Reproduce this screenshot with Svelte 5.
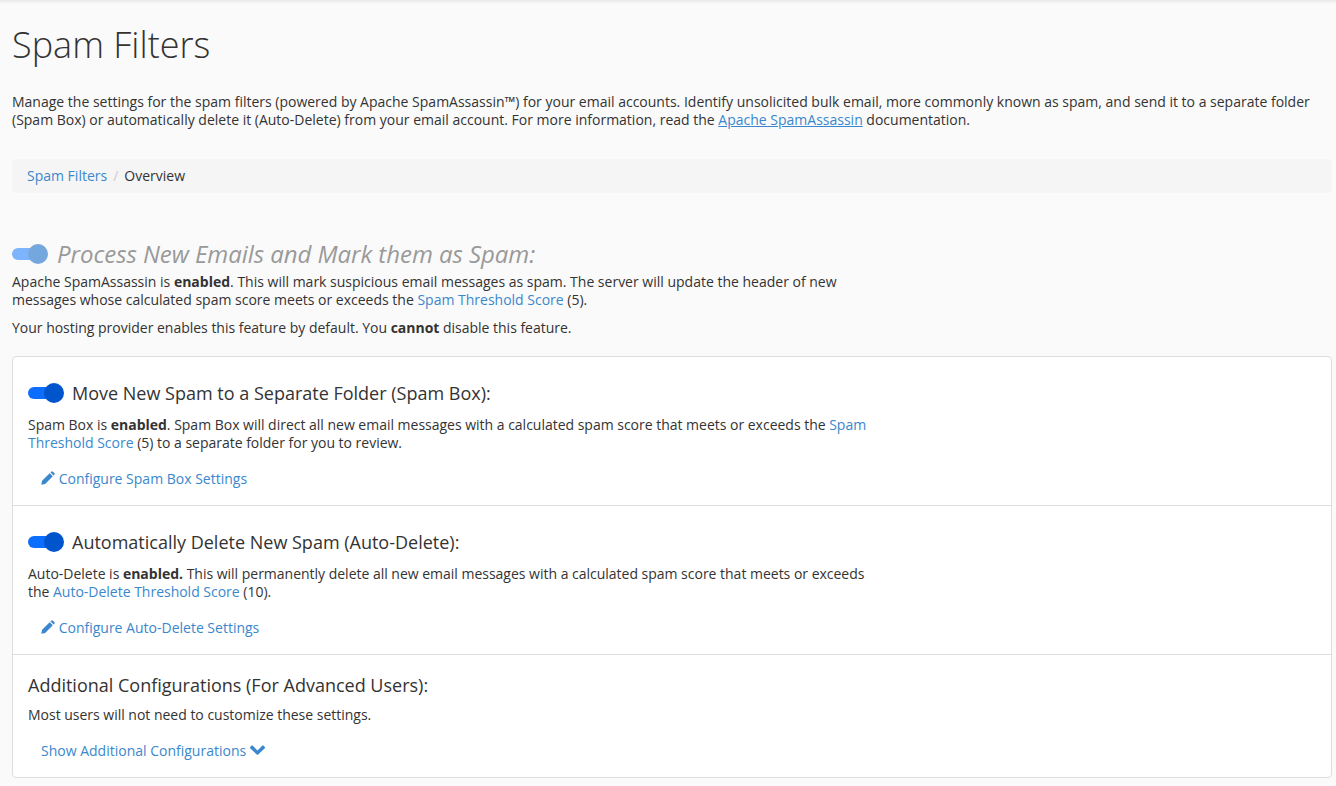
<script>
  const chevron = 'M7.5 5.4L12.2.7a1 1 0 0 1 1.4 0l1.2 1.2a1 1 0 0 1 0 1.4L8.2 9.6a1 1 0 0 1-1.4 0L.2 3.3a1 1 0 0 1 0-1.4L1.4.7a1 1 0 0 1 1.4 0z';
</script>

{#snippet toggle(muted = false)}
  <span class="toggle" class:muted>
    <span class="track"></span>
    <span class="knob"></span>
  </span>
{/snippet}

{#snippet editIcon()}
  <svg class="pencil" width="14" height="14" viewBox="0 0 14 14" aria-hidden="true">
    <path d="M0.3 13.7l.8-3.9 7.6-7.6 3.1 3.1-7.6 7.6z" fill="currentColor" />
    <path d="M9.5 1.4l.7-.7a1.2 1.2 0 0 1 1.7 0l1.4 1.4a1.2 1.2 0 0 1 0 1.7l-.7.7z" fill="currentColor" />
  </svg>
{/snippet}

<div class="topshadow"></div>

<div class="page">
  <h1>Spam Filters</h1>

  <p class="intro">
    Manage the settings for the spam filters (powered by Apache SpamAssassin™) for your email accounts. Identify unsolicited bulk email, more commonly known as spam, and send it to a separate folder (Spam Box) or automatically delete it (Auto-Delete) from your email account. For more information, read the <a href="#docs" class="underlined">Apache SpamAssassin</a> documentation.
  </p>

  <nav class="breadcrumb">
    <a href="#filters">Spam Filters</a>
    <span class="sep">/</span>
    <span class="current">Overview</span>
  </nav>

  <section class="process">
    <h2 class="muted-title">
      {@render toggle(true)}
      <em>Process New Emails and Mark them as Spam:</em>
    </h2>
    <div class="narrow">
      <p class="plain">Apache SpamAssassin is <strong>enabled</strong>. This will mark suspicious email messages as spam. The server will update the header of new messages whose calculated spam score meets or exceeds the <a href="#score">Spam Threshold Score</a> (5).</p>
      <p class="note">Your hosting provider enables this feature by default. You <strong>cannot</strong> disable this feature.</p>
    </div>
  </section>

  <div class="panel">
    <section class="row">
      <h3>
        {@render toggle()}
        Move New Spam to a Separate Folder (Spam Box):
      </h3>
      <p class="narrow">Spam Box is <strong>enabled</strong>. Spam Box will direct all new email messages with a calculated spam score that meets or exceeds the <a href="#score">Spam Threshold Score</a> (5) to a separate folder for you to review.</p>
      <a class="action" href="#box">{@render editIcon()} Configure Spam Box Settings</a>
    </section>

    <section class="row">
      <h3>
        {@render toggle()}
        Automatically Delete New Spam (Auto-Delete):
      </h3>
      <p class="narrow">Auto-Delete is <strong>enabled.</strong> This will permanently delete all new email messages with a calculated spam score that meets or exceeds the <a href="#delete">Auto-Delete Threshold Score</a> (10).</p>
      <a class="action" href="#auto">{@render editIcon()} Configure Auto-Delete Settings</a>
    </section>

    <section class="row last">
      <h3>Additional Configurations (For Advanced Users):</h3>
      <p class="narrow">Most users will not need to customize these settings.</p>
      <a class="action" href="#more">Show Additional Configurations
        <svg class="chevron" width="15" height="10" viewBox="0 0 15 10" aria-hidden="true">
          <path d={chevron} fill="currentColor" />
        </svg>
      </a>
    </section>
  </div>
</div>

<style>
  :global(body) {
    background: #fafafa;
    font-family: "Open Sans", sans-serif;
    font-size: 14px;
    line-height: 18px;
    color: #333;
    overflow: hidden;
  }

  a {
    color: #3a87cd;
    text-decoration: none;
  }

  a.underlined {
    text-decoration: underline;
  }

  p {
    margin: 0;
  }

  strong {
    font-weight: 700;
  }

  .topshadow {
    height: 4px;
    background: linear-gradient(#e9e9e9, #fafafa);
  }

  .page {
    padding: 0 4px 0 12px;
  }

  h1 {
    margin: 16px 0 0;
    font-size: 36px;
    line-height: 50px;
    font-weight: 300;
  }

  .intro {
    margin-top: 23px;
  }

  .breadcrumb {
    display: flex;
    margin-top: 30px;
    padding: 8px 15px;
    background: #f5f5f5;
    border-radius: 4px;
  }

  .sep {
    color: #ccc;
    padding: 0 6px;
  }

  .process {
    margin-top: 44px;
  }

  .muted-title {
    display: flex;
    align-items: center;
    gap: 9px;
    margin: 0 0 3px;
    font-size: 24px;
    line-height: 33px;
    font-weight: 400;
    letter-spacing: -0.05px;
    color: #999;
  }

  .muted-title em {
    font-style: italic;
  }

  .narrow {
    max-width: 840px;
    letter-spacing: -0.012px;
  }

  .plain {
    letter-spacing: 0;
  }

  .note {
    margin-top: 10px;
  }

  .panel {
    margin-top: 19px;
    background: #fff;
    border: 1px solid #ddd;
    border-radius: 4px;
  }

  .row {
    padding: 21px 15px 17px;
    border-bottom: 1px solid #ddd;
  }

  .row.last {
    border-bottom: 0;
    padding-top: 15px;
    padding-bottom: 17px;
  }

  h3 {
    display: flex;
    align-items: center;
    gap: 8px;
    margin: 0 0 8px;
    font-size: 18px;
    line-height: 30px;
    font-weight: 400;
  }

  .row.last h3 {
    margin-bottom: 6px;
  }

  .action {
    display: block;
    margin: 18px 0 0 13px;
  }

  .pencil {
    vertical-align: -1px;
  }

  .chevron {
    vertical-align: 1px;
  }

  .toggle {
    position: relative;
    display: inline-block;
    flex: none;
    width: 36px;
    height: 20px;
  }

  .track {
    position: absolute;
    left: 0;
    top: 4px;
    width: 24px;
    height: 12px;
    border-radius: 6px;
    background: #0d6efd;
  }

  .knob {
    position: absolute;
    right: 0;
    top: 0;
    width: 20px;
    height: 20px;
    border-radius: 50%;
    background: #0055cc;
  }

  .toggle.muted .track {
    background: #7db4fb;
  }

  .toggle.muted .knob {
    background: #75a7df;
  }
</style>
